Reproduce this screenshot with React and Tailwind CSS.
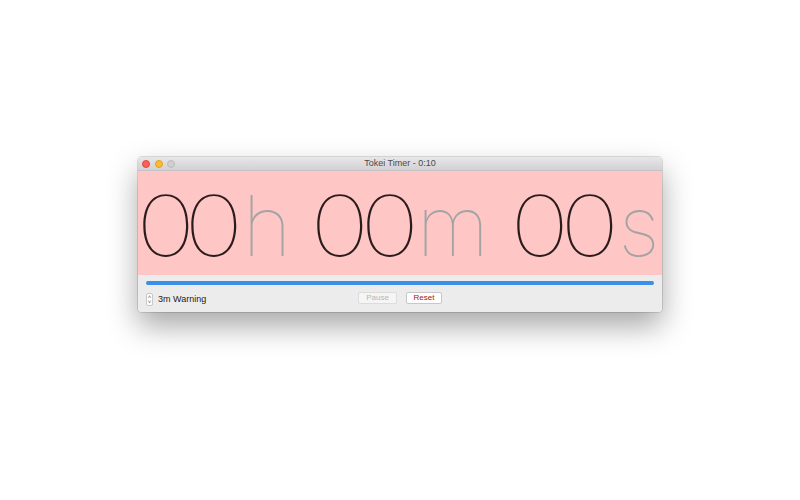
import React from 'react';

const Digit = ({ w, ml = 0 }) => (
  <span className="inline-block text-center text-[#2b1c1c]" style={{ width: w, marginLeft: ml }}>
    <span className="inline-block scale-x-[1.2]">0</span>
  </span>
);

const Unit = ({ ch, w }) => (
  <span className="inline-block text-center text-[#a3a3a3]" style={{ width: w }}>{ch}</span>
);

const App = () => (
  <div className="w-[800px] h-[500px] bg-white relative" style={{ fontFamily: '"Liberation Sans", Arial, sans-serif' }}>
    <div className="absolute left-[138px] top-[157px] w-[524px] rounded-[4px] overflow-hidden shadow-[0_14px_30px_rgba(0,0,0,0.35),0_0_0_1px_rgba(0,0,0,0.12)]">
      {/* title bar */}
      <div className="h-[14px] bg-gradient-to-b from-[#e8e6e8] to-[#d3d1d3] flex items-center relative border-b border-[#c4c2c4]">
        <div className="flex items-center gap-[4.5px] pl-[4px]">
          <span className="w-[8px] h-[8px] rounded-full bg-[#fc5f57] border border-[#e0443e]" />
          <span className="w-[8px] h-[8px] rounded-full bg-[#fdbc2e] border border-[#dea123]" />
          <span className="w-[8px] h-[8px] rounded-full bg-[#d0ced0] border border-[#bdbbbd]" />
        </div>
        <div className="absolute inset-0 flex items-center justify-center text-[9px] text-[#4a4a4a]">Tokei Timer - 0:10</div>
      </div>
      {/* time display */}
      <div className="h-[104px] bg-[#ffc6c6] flex items-center overflow-hidden">
        <div className="flex items-baseline text-[84px] leading-none whitespace-nowrap pl-[3px] mt-[5px]" style={{ fontFamily: 'Inter, Lato, sans-serif', fontWeight: 100 }}>
          <Digit w={48} />
          <Digit w={48} />
          <Unit ch="h" w={60} />
          <Digit w={49} ml={18} />
          <Digit w={49} ml={1} />
          <Unit ch="m" w={78} />
          <Digit w={49} ml={23} />
          <Digit w={49} ml={1} />
          <Unit ch="s" w={50} />
        </div>
      </div>
      {/* controls */}
      <div className="h-[37px] bg-[#ececec] flex flex-col px-[8px] pt-[6px]">
        <div className="h-[4px] rounded-full bg-[#3b8fe8]" />
        <div className="flex items-center mt-[8px] relative">
          <div className="flex items-center gap-[5px]">
            <span className="w-[7px] h-[13px] rounded-[2px] bg-white border border-[#c8c8c8] flex flex-col items-center justify-center text-[6px] leading-[5px] text-[#555]">
              <span>˄</span>
              <span>˅</span>
            </span>
            <span className="text-[9px] text-[#222]">3m Warning</span>
          </div>
          <div className="absolute left-[212px] top-[-1px] flex gap-[9px]">
            <button className="w-[39px] h-[12px] rounded-[2px] bg-[#f5f5f5] border border-[#dcdcdc] text-[8px] leading-none text-[#b5b5b5]">Pause</button>
            <button className="w-[36px] h-[12px] rounded-[2px] bg-white border border-[#c8c8c8] text-[8px] leading-none text-[#a01818]">Reset</button>
          </div>
        </div>
      </div>
    </div>
  </div>
);

export default App;
